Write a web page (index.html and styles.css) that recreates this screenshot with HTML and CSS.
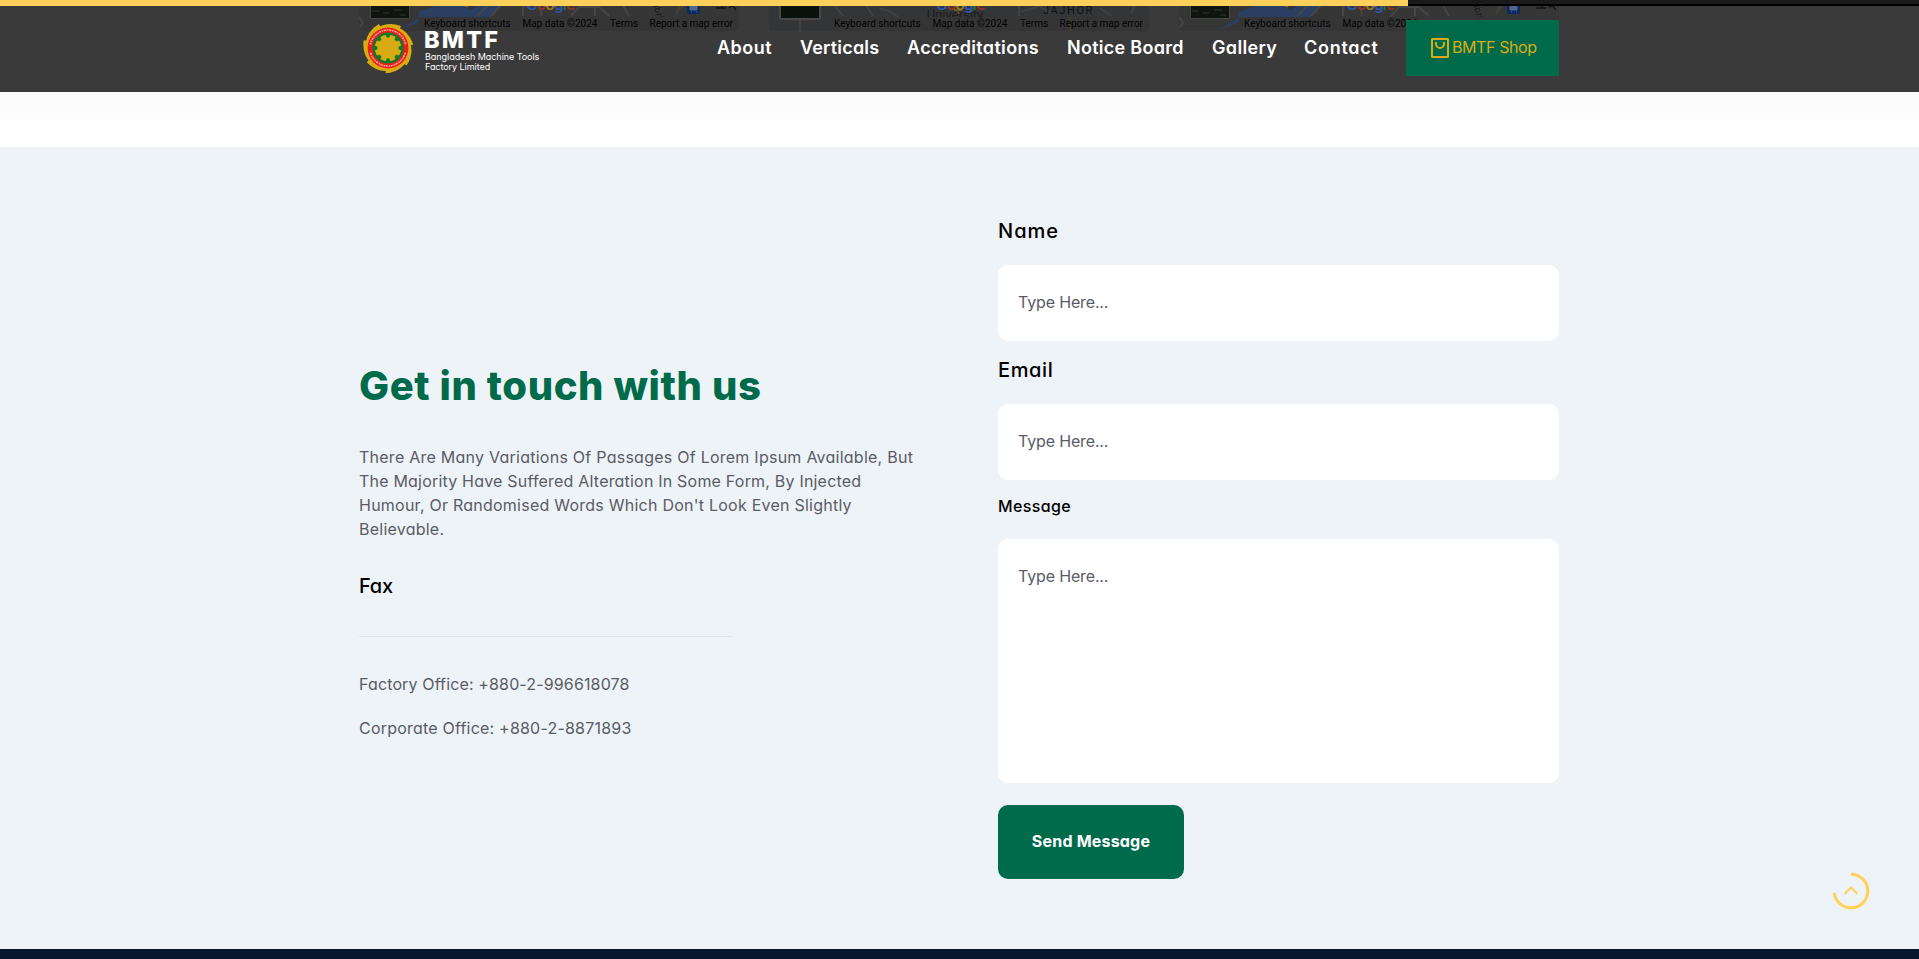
FILE: index.html
```html
<!DOCTYPE html>
<html lang="en">
<head>
<meta charset="utf-8">
<title>BMTF - Contact</title>
<link rel="stylesheet" href="styles.css">
</head>
<body>
<svg width="0" height="0" class="defs" aria-hidden="true">
  <defs>
    <g id="map-river">
      <rect width="380" height="31" fill="#363636"/>
      <path d="M39 31 61 17H132L145 0H92L60 12V22Z" fill="#2b3f63"/>
      <path d="M91 0 112 10 127 0Z" fill="#30343c"/>
      <path d="M95 0 109 7" stroke="#675d36" stroke-width="2"/>
      <path d="M0 17 4 23 0 28M118 16 134 0M132 16 143 4M164 3V16M181 6l2 10M212 16l8-9h20l10 9M236 7v9M262 2l8 14M304 0l-4 14" fill="none" stroke="#454545" stroke-width="2"/>
      <path d="M316 16 331 0H320Z" fill="#403f38"/>
      <rect x="328" y="-1" width="13" height="15" rx="2" fill="#0c2a62"/>
      <path d="M331 5h7v5h-7zM332 12h1M337 12h1" fill="#56668a" stroke="#56668a"/>
      <path d="M357 8h10M363 5v4M370 8l3-3 4 5M374 4h6" stroke="#141414" stroke-width="1.4" fill="none"/>
      <path d="M132 26h6M145 24h4" stroke="#2b3f63" stroke-width="3"/>
      <rect x="11" y="-10" width="40" height="29" rx="2" fill="#484848"/>
      <rect x="12" y="-10" width="38" height="28" fill="#10150f"/>
      <path d="M13 11h7M24 13h6M35 10h8M41 15h6" stroke="#20261d" stroke-width="2"/>
    </g>
    <g id="map-town">
      <rect width="380" height="31" fill="#343537"/>
      <rect x="60" y="17" width="320" height="14" fill="#363636"/>
      <path d="M31 19v12M66 6l8 10M94 0l10 16M110 8l12 4 8 6M250 0v16M252 12l18-6 14 8M331 8l12 8M340 0h28l-6 14" fill="none" stroke="#404143" stroke-width="2"/>
      <path d="M185 10h8M187 13h4M301 17v14" stroke="#6f5a21" stroke-width="2"/>
      <rect x="10" y="-10" width="42" height="30" rx="2" fill="#484848"/>
      <rect x="12" y="-10" width="38" height="28" fill="#0b120b"/>
    </g>
  </defs>
</svg>

<header class="header">
  <div class="maps">
    <div class="map">
      <svg class="map-art" width="380" height="31"><use href="#map-river"/></svg>
      <div class="google"><b class="g-blue">G</b><b class="g-red">o</b><b class="g-gold">o</b><b class="g-blue">g</b><b class="g-green">l</b><b class="g-red">e</b></div>
      <span class="street">Nabri</span>
      <div class="credits"><span class="c-keys">Keyboard shortcuts</span><span class="c-data">Map data ©2024</span><span class="c-terms">Terms</span><span>Report a map error</span></div>
    </div>
    <div class="map">
      <svg class="map-art" width="380" height="31"><use href="#map-town"/></svg>
      <div class="place uni">University<br>Bangladesh</div>
      <div class="google"><b class="g-blue">G</b><b class="g-red">o</b><b class="g-gold">o</b><b class="g-blue">g</b><b class="g-green">l</b><b class="g-red">e</b></div>
      <div class="place area">JAJHOR</div>
      <div class="credits"><span class="c-keys">Keyboard shortcuts</span><span class="c-data">Map data ©2024</span><span class="c-terms">Terms</span><span>Report a map error</span></div>
    </div>
    <div class="map">
      <svg class="map-art" width="380" height="31"><use href="#map-river"/></svg>
      <div class="google"><b class="g-blue">G</b><b class="g-red">o</b><b class="g-gold">o</b><b class="g-blue">g</b><b class="g-green">l</b><b class="g-red">e</b></div>
      <span class="street">Nabri</span>
      <div class="credits"><span class="c-keys">Keyboard shortcuts</span><span class="c-data">Map data ©2024</span></div>
    </div>
  </div>
  <div class="progress"><div class="progress-bar"></div></div>

  <div class="container bar">
    <a class="logo" href="#">
      <svg class="emblem" width="52" height="50" viewBox="-26 -25 52 50">
        <g fill="#d9ab13">
          <circle r="22.6"/>
          <path id="tooth" d="M-17-15-11-20Q0-27 13-22L11.5-18Z"/>
          <use href="#tooth" transform="rotate(51.4)"/>
          <use href="#tooth" transform="rotate(102.9)"/>
          <use href="#tooth" transform="rotate(154.3)"/>
          <use href="#tooth" transform="rotate(205.7)"/>
          <use href="#tooth" transform="rotate(257.1)"/>
          <use href="#tooth" transform="rotate(308.6)"/>
        </g>
        <circle r="20.4" fill="#f01d17"/>
        <circle r="18" fill="none" stroke="#ffb9ae" stroke-width="1.5" stroke-dasharray="1.4 1 2 .8"/>
        <path d="M-17.5 4A18 18 0 0 1-17.8-3M17.8-3A18 18 0 0 1 17.5 4" stroke="#f01d17" stroke-width="3" fill="none"/>
        <circle r="15.6" fill="#0d7a2b"/>
        <g fill="#d9ab13">
          <circle r="10.6"/>
          <path id="cog" d="M-3-9-2.7-13.2H2.7L3-9Z" transform="rotate(22.5)"/>
          <use href="#cog" transform="rotate(45)"/>
          <use href="#cog" transform="rotate(90)"/>
          <use href="#cog" transform="rotate(135)"/>
          <use href="#cog" transform="rotate(180)"/>
          <use href="#cog" transform="rotate(225)"/>
          <use href="#cog" transform="rotate(270)"/>
          <use href="#cog" transform="rotate(315)"/>
        </g>
      </svg>
      <span class="logo-text">
        <span class="logo-name">BMTF</span>
        <span class="logo-sub">Bangladesh Machine Tools</span>
        <span class="logo-sub">Factory Limited</span>
      </span>
    </a>
    <nav class="nav">
      <a class="n-about" href="#">About</a>
      <a class="n-verticals" href="#">Verticals</a>
      <a class="n-accred" href="#">Accreditations</a>
      <a class="n-notice" href="#">Notice Board</a>
      <a class="n-gallery" href="#">Gallery</a>
      <a class="n-contact" href="#">Contact</a>
      <a class="shop" href="#">
        <svg width="18" height="20" viewBox="0 0 18 20" fill="none" stroke="#d9ab13" stroke-width="2">
          <rect x="1" y="1" width="16" height="18" rx=".5"/>
          <path d="M5 4v2a4 4 0 0 0 8 0V4"/>
        </svg>
        <span>BMTF Shop</span>
      </a>
    </nav>
  </div>
</header>

<div class="spacer"></div>

<section class="contact">
  <div class="container columns">
    <div class="info">
      <h2>Get in touch with us</h2>
      <p class="intro">
        <span class="l1">There Are Many Variations Of Passages Of Lorem Ipsum Available, But</span>
        <span class="l2">The Majority Have Suffered Alteration In Some Form, By Injected</span>
        <span>Humour, Or Randomised Words Which Don't Look Even Slightly</span>
        <span>Believable.</span>
      </p>
      <h3>Fax</h3>
      <hr>
      <p class="phone factory">Factory Office: +880-2-996618078</p>
      <p class="phone corporate">Corporate Office: +880-2-8871893</p>
    </div>
    <form class="form">
      <label class="lb-name" for="name">Name</label>
      <input id="name" type="text" placeholder="Type Here...">
      <label class="lb-email" for="email">Email</label>
      <input id="email" type="text" placeholder="Type Here...">
      <label class="lb-message" for="message">Message</label>
      <textarea id="message" placeholder="Type Here..."></textarea>
      <button type="button">Send Message</button>
    </form>
  </div>
</section>
<footer class="footer"></footer>

<a class="to-top" href="#" aria-label="Back to top">
  <svg width="40" height="40" viewBox="-20 -20 40 40" fill="none" stroke="#ffd15a">
    <path d="M0-16.8A16.8 16.8 0 1 1-16.7 1.8" stroke-width="3"/>
    <path d="M-6.5 3 0-3.5 6.5 3" stroke-width="2"/>
  </svg>
</a>
</body>
</html>
```
FILE: styles.css
```css
* { box-sizing: border-box; }

body {
  margin: 0;
  height: 959px;
  overflow: hidden;
  background: #fff;
  color: #000;
  font-family: Inter, "Liberation Sans", sans-serif;
  font-feature-settings: "cv11";
}

a { text-decoration: none; }
.defs { position: absolute; }
.container { width: 1200px; margin: 0 auto 0 359px; }

/* Header */
.header {
  position: relative;
  height: 92px;
  background: #3a3a3a;
  overflow: hidden;
}

.maps {
  position: absolute;
  top: 0;
  left: 359px;
  display: flex;
  gap: 30px;
}

.map {
  position: relative;
  width: 380px;
  height: 31px;
  overflow: hidden;
  border-radius: 0 0 5px 5px;
  font-family: Roboto, sans-serif;
  font-feature-settings: normal;
}

.map-art { display: block; }

.google {
  position: absolute;
  left: 167px;
  top: -6px;
  font-size: 17px;
  line-height: 20px;
  letter-spacing: -1px;
}

.google b { font-weight: 500; }
.g-blue { color: #2a57ab; }
.g-red { color: #96302a; }
.g-gold { color: #94761c; }
.g-green { color: #237438; }

.street {
  position: absolute;
  left: 286px;
  top: 0;
  font-size: 10px;
  line-height: 14px;
  color: #161616;
  transform: rotate(75deg);
}

.place {
  position: absolute;
  white-space: nowrap;
  color: #121212;
}

.uni { left: 152px; top: 8px; font-size: 13px; line-height: 14px; text-align: center; color: #1c1c1c; }
.area { left: 274px; top: 4px; font-size: 11px; line-height: 14px; letter-spacing: 1.6px; }

.credits {
  position: absolute;
  left: 60px;
  top: 17px;
  display: flex;
  width: 320px;
  height: 14px;
  padding-left: 5px;
  background: rgba(54, 54, 54, 0.8);
  font-size: 10px;
  line-height: 14px;
  white-space: nowrap;
  color: #020202;
}

.c-keys { width: 98.5px; }
.c-data { width: 87.5px; }
.c-terms { width: 39.5px; }

.progress {
  position: absolute;
  inset: 0 0 auto;
  height: 6px;
  background: #1a1a1a;
  border-bottom: 2px solid #000;
}

.progress-bar { width: 1408px; height: 6px; background: #ffd15a; }

.bar {
  position: relative;
  display: flex;
  justify-content: space-between;
  padding-top: 20px;
}

.logo {
  display: flex;
  gap: 11px;
  padding: 3px 0 0 3px;
  color: #fff;
}

.logo-text { display: flex; flex-direction: column; padding-top: 5px; }
.logo-name { margin-left: -1px; font-size: 23.5px; font-weight: 800; line-height: 24px; letter-spacing: 2.2px; }
.logo-sub { font-size: 9px; font-weight: 400; line-height: 10px; letter-spacing: -0.05px; }

.nav {
  display: flex;
  align-items: center;
  height: 56px;
  font-size: 18px;
  font-weight: 600;
}

.nav a { padding-bottom: 2px; color: #fff; }
.n-about { width: 83px; letter-spacing: 0.5px; }
.n-verticals { width: 107px; letter-spacing: 0.2px; }
.n-accred { width: 160px; letter-spacing: 0.32px; }
.n-notice { width: 145px; letter-spacing: 0.28px; }
.n-gallery { width: 92px; letter-spacing: 0.35px; }
.n-contact { width: 102px; letter-spacing: 0.72px; }

.nav .shop {
  display: flex;
  align-items: center;
  gap: 3px;
  width: 153px;
  height: 56px;
  padding: 0 0 0 25px;
  background: #006b4b;
  color: #d9ab13;
  font-size: 16px;
  font-weight: 400;
  letter-spacing: -0.4px;
}

.shop span { padding-bottom: 2px; }

.spacer {
  height: 55px;
  background: linear-gradient(#fafafa, #fefefe 31px, #fff 31px);
}

/* Contact */
.contact { height: 802px; background: #edf3f6; }

.columns {
  display: grid;
  grid-template-columns: 1fr 1fr;
  column-gap: 78px;
}

.info { padding-top: 215px; }

h2, h3, p { margin: 0; }

h2 {
  color: #006b4b;
  font-size: 40px;
  font-weight: 800;
  line-height: 48px;
  letter-spacing: 0.6px;
}

.intro { margin-top: 35px; }

.intro, .phone {
  font-size: 16px;
  line-height: 24px;
  color: #5b5b66;
}

.intro span { display: block; white-space: nowrap; letter-spacing: 0.24px; }
.intro .l1 { letter-spacing: 0.25px; }
.intro .l2 { letter-spacing: 0.2px; }

h3 {
  margin-top: 30px;
  font-size: 20px;
  font-weight: 500;
  line-height: 30px;
  letter-spacing: -0.2px;
}

hr {
  width: 374px;
  height: 1px;
  margin: 35px 0;
  border: 0;
  background: #e1e6e9;
}

.factory { letter-spacing: 0.14px; }
.corporate { margin-top: 20px; letter-spacing: 0.21px; }

.form {
  display: flex;
  flex-direction: column;
  padding-top: 69px;
}

label { font-size: 20px; font-weight: 500; line-height: 30px; }
.lb-name { letter-spacing: 1px; }
.lb-email { margin-top: 14px; letter-spacing: 0.6px; }
.lb-message { margin-top: 14px; font-size: 16px; line-height: 24px; letter-spacing: 0.36px; }

input, textarea {
  width: 100%;
  border: 0;
  border-radius: 10px;
  background: #fff;
  font: 400 16px/24px Inter, "Liberation Sans", sans-serif;
  font-feature-settings: "cv11";
  letter-spacing: -0.15px;
}

input { height: 76px; margin-top: 19px; padding: 0 20px 2px; }
textarea { height: 244px; margin-top: 21px; padding: 25px 20px; resize: none; }
input::placeholder, textarea::placeholder { color: #5b5b66; opacity: 1; }

button {
  width: 186px;
  height: 74px;
  margin-top: 22px;
  padding: 0 0 2px;
  border: 0;
  border-radius: 10px;
  background: #006b4b;
  color: #fff;
  font: 700 16px/24px Inter, "Liberation Sans", sans-serif;
  font-feature-settings: "cv11";
  letter-spacing: 0.2px;
}

.footer { height: 10px; background: #07162d; }

.to-top {
  position: absolute;
  left: 1831px;
  top: 871px;
  width: 40px;
  height: 40px;
}
```
